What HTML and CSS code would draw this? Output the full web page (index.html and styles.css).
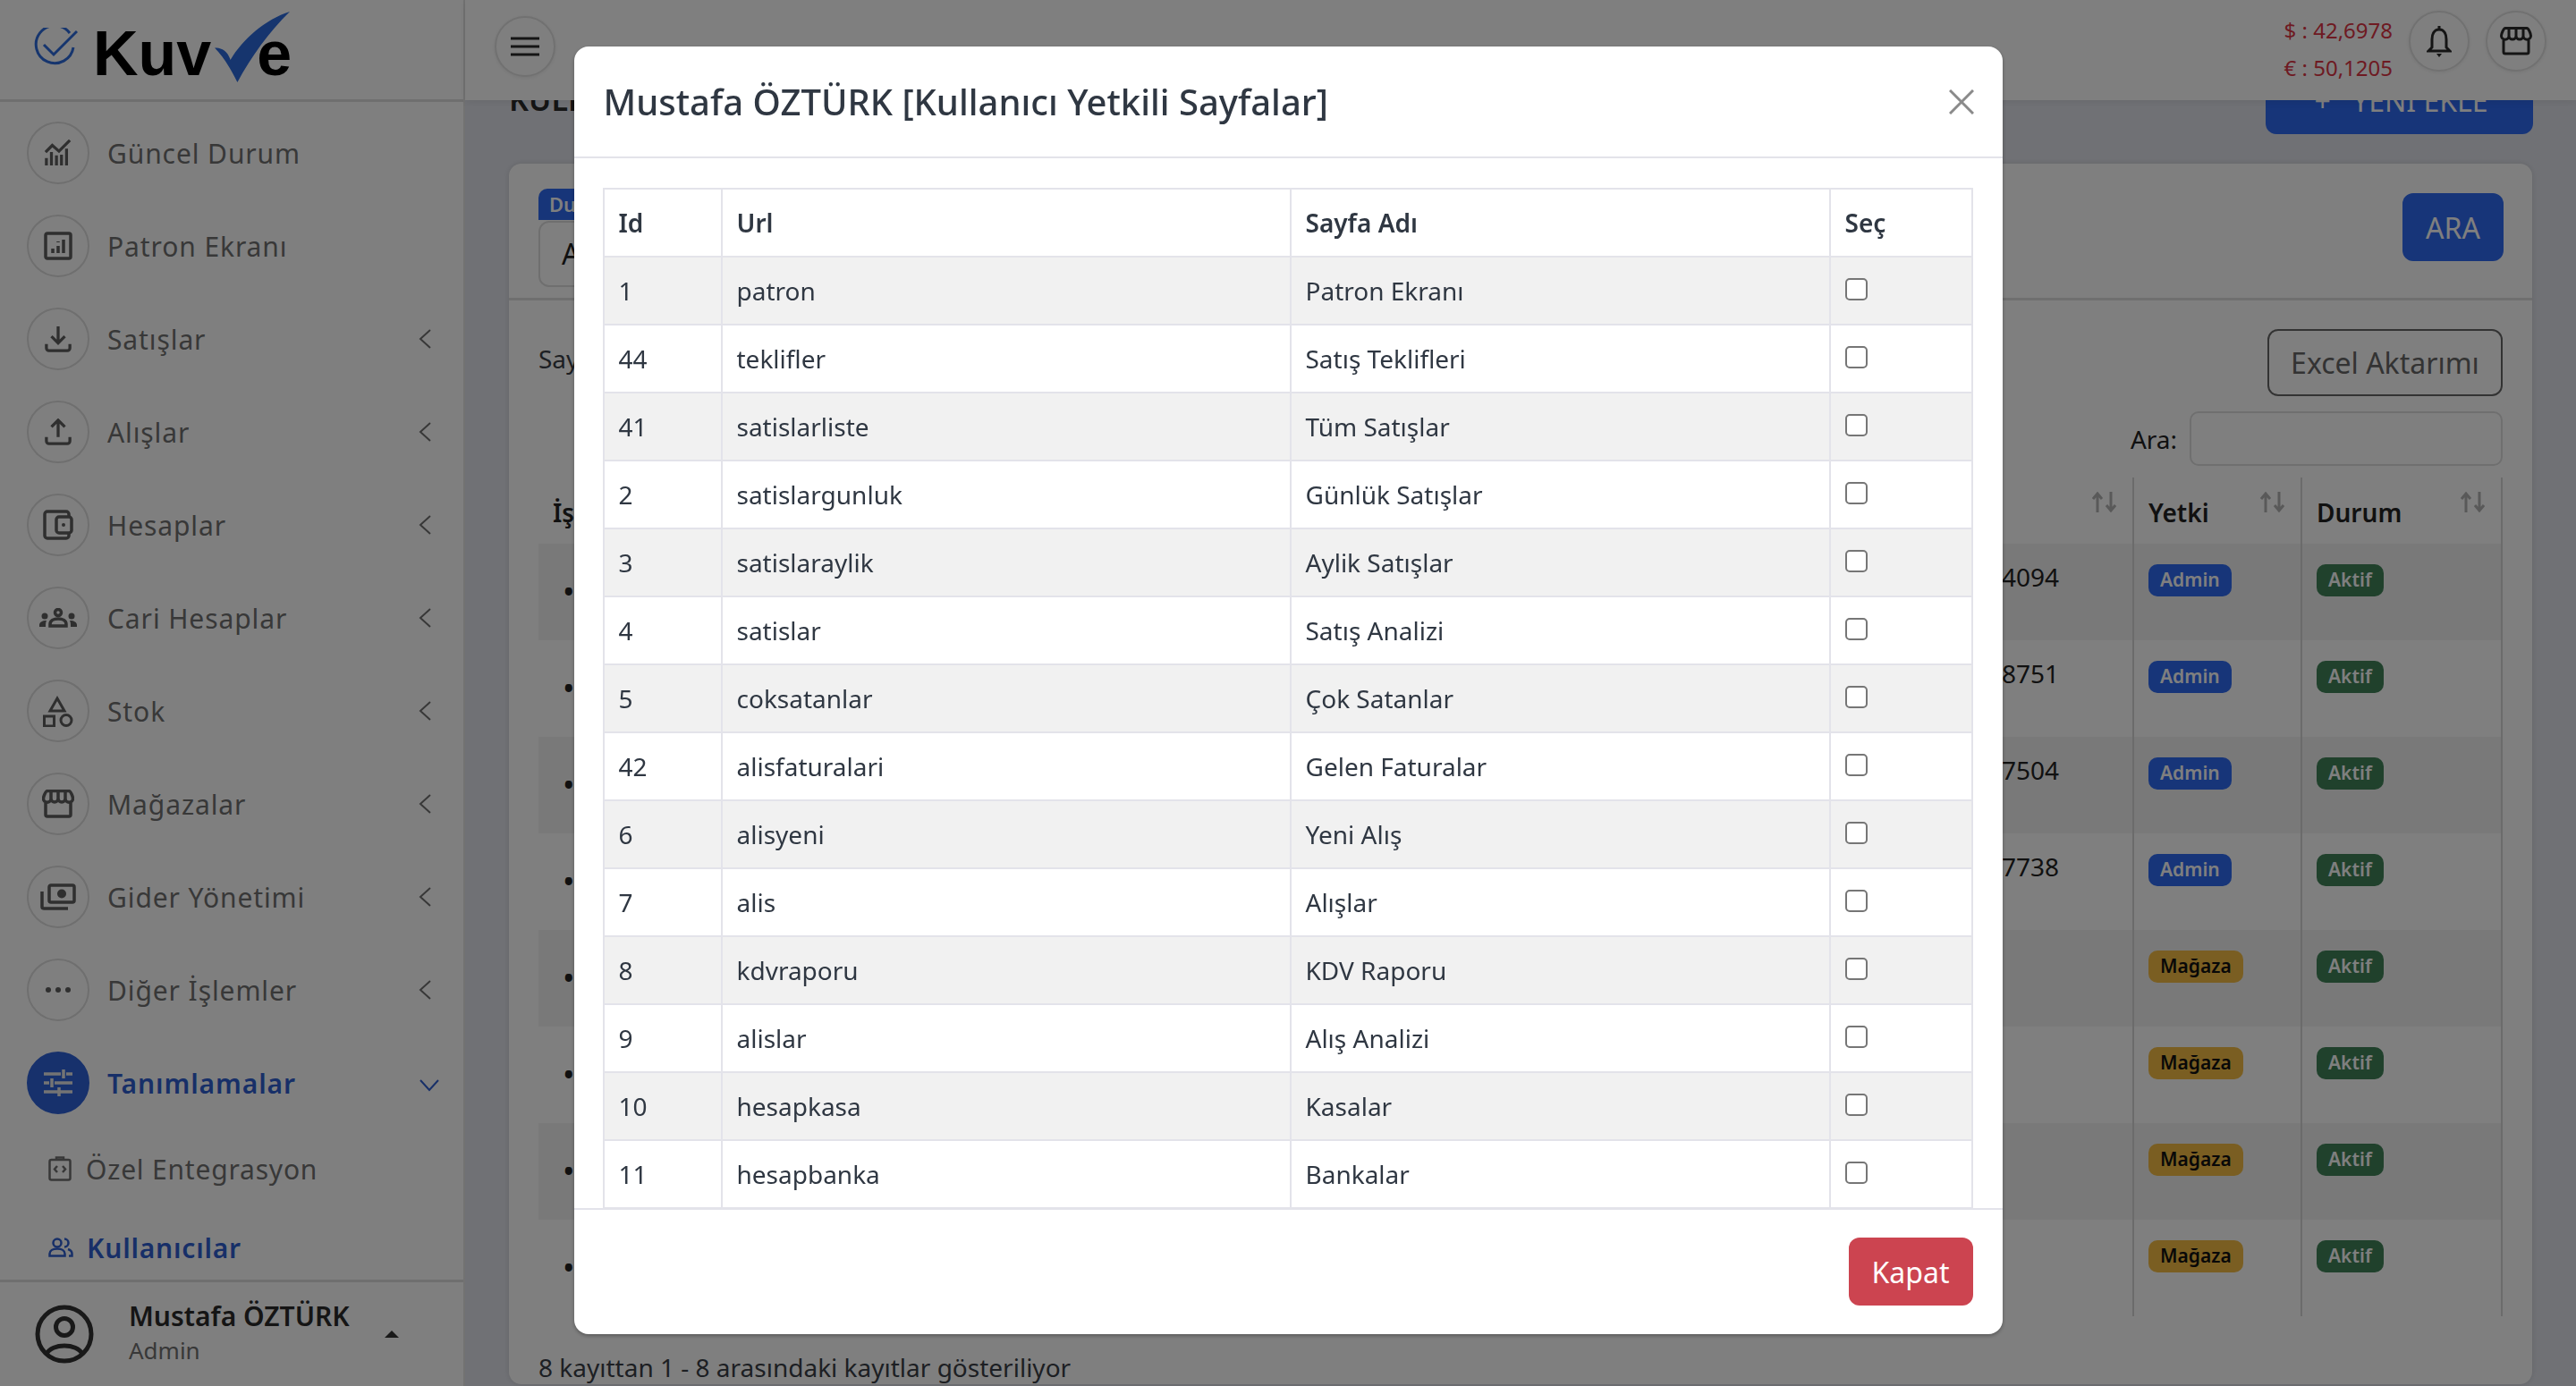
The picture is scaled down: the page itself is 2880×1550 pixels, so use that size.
FILE: index.html
```html
<!DOCTYPE html>
<html lang="tr">
<head>
    <meta charset="UTF-8">
    <meta name="viewport" content="width=device-width, initial-scale=1.0">
    <title>Kullanıcılar</title>
    <link rel="stylesheet" href="styles.css">
</head>
<body>
    <aside class="sidebar">
        <div class="logo">
            <svg class="logo-mark" viewBox="0 0 50 46" width="50" height="46">
                <path d="M41 6A21 21 0 1 0 45 22" />
                <path d="M12 19L23 30L49 4" />
            </svg>
            <span class="logo-text">Kuv</span>
            <svg class="logo-check" viewBox="0 0 86 82" width="84" height="79" preserveAspectRatio="none">
                <path d="M0 42C7 42 14 44 18 56C32 32 58 9 86 0C62 24 42 52 26 82C18 66 10 52 0 42Z" />
            </svg>
            <span class="logo-text logo-end">e</span>
        </div>
        <nav class="menu">
            <a class="menu-item">
                <span class="menu-icon"><svg viewBox="0 0 32 32" width="30" height="30"><path d="M1 15L9 7L17 14L30 1" /><path d="M2 31V22M8 31V15M14 31V19M20 31V18M26 31V11" /></svg></span>
                <span>Güncel Durum</span>
            </a>
            <a class="menu-item">
                <span class="menu-icon"><svg viewBox="0 0 32 32" width="32" height="32"><rect x="2" y="2" width="28" height="28" rx="2" /><path d="M10 24V19M16 24V16M16 12V11M22 24V9" /></svg></span>
                <span>Patron Ekranı</span>
            </a>
            <a class="menu-item">
                <span class="menu-icon"><svg viewBox="0 0 32 32" width="30" height="30"><path d="M16 1V21M8 13L16 21L24 13" /><path d="M2 22V27A3 3 0 0 0 5 30H27A3 3 0 0 0 30 27V22" /></svg></span>
                <span>Satışlar</span>
                <svg class="chevron" viewBox="0 0 14 22" width="14" height="22"><path d="M13 1L2 11L13 21" /></svg>
            </a>
            <a class="menu-item">
                <span class="menu-icon"><svg viewBox="0 0 32 32" width="30" height="30"><path d="M16 22V2M8 10L16 2L24 10" /><path d="M2 22V27A3 3 0 0 0 5 30H27A3 3 0 0 0 30 27V22" /></svg></span>
                <span>Alışlar</span>
                <svg class="chevron" viewBox="0 0 14 22" width="14" height="22"><path d="M13 1L2 11L13 21" /></svg>
            </a>
            <a class="menu-item">
                <span class="menu-icon"><svg viewBox="0 0 34 34" width="34" height="34"><path d="M29 8V5A3 3 0 0 0 26 2H5A3 3 0 0 0 2 5V29A3 3 0 0 0 5 32H26A3 3 0 0 0 29 29V26" /><rect x="15" y="8" width="17" height="18" rx="3" /><circle class="solid" cx="23" cy="17" r="2" /></svg></span>
                <span>Hesaplar</span>
                <svg class="chevron" viewBox="0 0 14 22" width="14" height="22"><path d="M13 1L2 11L13 21" /></svg>
            </a>
            <a class="menu-item">
                <span class="menu-icon"><svg viewBox="0 0 42 22" width="42" height="22"><circle cx="21" cy="5" r="3.5" /><path d="M12 20V18C12 14 16 12 21 12S30 14 30 18V20Z" /><circle class="solid" cx="6" cy="9" r="3.5" /><circle class="solid" cx="36" cy="9" r="3.5" /><path class="solid" d="M0 21V19C0 16 3 14 8 14C7 16 7 18 7 21Z" /><path class="solid" d="M42 21V19C42 16 39 14 34 14C35 16 35 18 35 21Z" /></svg></span>
                <span>Cari Hesaplar</span>
                <svg class="chevron" viewBox="0 0 14 22" width="14" height="22"><path d="M13 1L2 11L13 21" /></svg>
            </a>
            <a class="menu-item">
                <span class="menu-icon"><svg class="icon-thin" viewBox="0 0 34 35" width="34" height="35"><path d="M16 3L24 17H8Z" /><rect x="1.5" y="23" width="11" height="11" /><circle cx="26" cy="27.500" r="6" /></svg></span>
                <span>Stok</span>
                <svg class="chevron" viewBox="0 0 14 22" width="14" height="22"><path d="M13 1L2 11L13 21" /></svg>
            </a>
            <a class="menu-item">
                <span class="menu-icon"><svg viewBox="0 0 36 32" width="36" height="32"><path d="M6 1.5H30C32 1.5 34.5 8 34.5 10A4 4 0 0 1 26 10A4 4 0 0 1 18 10A4 4 0 0 1 10 10A4 4 0 0 1 1.5 10C1.5 8 4 1.5 6 1.5Z" /><path d="M10 2V10M18 2V10M26 2V10" /><path d="M4 15V28A2 2 0 0 0 6 30H30A2 2 0 0 0 32 28V15" /></svg></span>
                <span>Mağazalar</span>
                <svg class="chevron" viewBox="0 0 14 22" width="14" height="22"><path d="M13 1L2 11L13 21" /></svg>
            </a>
            <a class="menu-item">
                <span class="menu-icon"><svg viewBox="0 0 40 30" width="40" height="30"><rect x="10" y="2" width="28" height="19" rx="2" /><circle class="solid" cx="24" cy="11.5" r="5" /><path d="M2 9V26A2 2 0 0 0 4 28H31" /></svg></span>
                <span>Gider Yönetimi</span>
                <svg class="chevron" viewBox="0 0 14 22" width="14" height="22"><path d="M13 1L2 11L13 21" /></svg>
            </a>
            <a class="menu-item">
                <span class="menu-icon"><svg viewBox="0 0 30 8" width="30" height="8"><circle class="solid" cx="4" cy="4" r="3" /><circle class="solid" cx="15" cy="4" r="3" /><circle class="solid" cx="26" cy="4" r="3" /></svg></span>
                <span>Diğer İşlemler</span>
                <svg class="chevron" viewBox="0 0 14 22" width="14" height="22"><path d="M13 1L2 11L13 21" /></svg>
            </a>
            <a class="menu-item menu-active">
                <span class="menu-icon"><svg viewBox="0 0 32 32" width="32" height="32"><path d="M0 6H19M25 6H32M22 1V11M0 16H6M12 16H32M9 11V21M0 26H12M12 26H32M17 21V31" /></svg></span>
                <span>Tanımlamalar</span>
                <svg class="chevron chevron-down" viewBox="0 0 22 14" width="22" height="14"><path d="M1 1L11 12L21 1" /></svg>
            </a>
            <div class="submenu">
                <a class="sub-item">
                    <svg viewBox="0 0 26 28" width="26" height="28"><rect x="1.5" y="4" width="23" height="22.5" rx="2" /><path d="M9 4V1.5H17V4M10 11L7 14.5L10 18M16 11L19 14.5L16 18" /></svg>
                    <span>Özel Entegrasyon</span>
                </a>
                <a class="sub-item sub-active">
                    <svg viewBox="0 0 28 22" width="28" height="22"><circle cx="10" cy="6" r="4.5" /><path d="M1.5 20.5V18C1.5 14.5 5 12.5 10 12.5S18.5 14.5 18.5 18V20.5ZM18 1.5A4.5 4.5 0 0 1 18 10.5M22 13C25 14 26.5 16 26.5 18V20.5H23" /></svg>
                    <span>Kullanıcılar</span>
                </a>
            </div>
        </nav>
        <div class="user-box">
            <svg class="avatar" viewBox="0 0 66 66" width="66" height="66"><circle cx="33" cy="33" r="30" /><circle cx="33" cy="25" r="9.5" /><path d="M13 55C19 43 47 43 53 55" /></svg>
            <div class="user-info">
                <div class="user-name">Mustafa ÖZTÜRK</div>
                <div class="user-role">Admin</div>
            </div>
            <span class="caret"></span>
        </div>
    </aside>

    <div class="main">
        <header class="topbar">
            <button class="round-btn burger">
                <svg viewBox="0 0 32 22" width="32" height="22"><path d="M0 2H32M0 11H32M0 20H32" /></svg>
            </button>
            <div class="rates">
                <div>$ : 42,6978</div>
                <div>€ : 50,1205</div>
            </div>
            <button class="round-btn">
                <svg viewBox="0 0 28 36" width="28" height="36"><path d="M14 5C8 5 6 11 6 16V25L2 29H26L22 25V16C22 11 20 5 14 5ZM14 1V5" /><path class="solid" d="M11 32H17L14 36Z" /></svg>
            </button>
            <button class="round-btn">
                <svg viewBox="0 0 36 32" width="36" height="32"><path d="M6 1.5H30C32 1.5 34.5 8 34.5 10A4 4 0 0 1 26 10A4 4 0 0 1 18 10A4 4 0 0 1 10 10A4 4 0 0 1 1.5 10C1.5 8 4 1.5 6 1.5Z" /><path d="M10 2V10M18 2V10M26 2V10" /><path d="M4 15V28A2 2 0 0 0 6 30H30A2 2 0 0 0 32 28V15" /></svg>
            </button>
        </header>

        <div class="content">
            <div class="page-head">
                <h2>KULLANICILAR</h2>
                <button class="btn-primary btn-new"><span class="plus">+</span> YENİ EKLE</button>
            </div>

            <section class="card">
                <div class="filters">
                    <div class="filter-field">
                        <span class="filter-label">Durum</span>
                        <div class="filter-select">Aktif</div>
                    </div>
                    <button class="btn-primary btn-search">ARA</button>
                </div>
                <div class="card-body">
                    <div class="tools">
                        <span>Sayfada 10 kayıt</span>
                        <button class="btn-excel">Excel Aktarımı</button>
                    </div>
                    <div class="search-row">
                        <label>Ara:</label>
                        <div class="search-box"></div>
                    </div>
                    <table class="users">
                        <colgroup>
                            <col class="col-action">
                            <col class="col-phone">
                            <col class="col-role">
                            <col class="col-state">
                        </colgroup>
                        <thead>
                            <tr>
                                <th>İşlem</th>
                                <th><svg class="sort" viewBox="0 0 27 23" width="27" height="23"><path d="M6 23V3M1 8L6 2L11 8M21 0V20M16 15L21 21L26 15" /></svg></th>
                                <th>Yetki<svg class="sort" viewBox="0 0 27 23" width="27" height="23"><path d="M6 23V3M1 8L6 2L11 8M21 0V20M16 15L21 21L26 15" /></svg></th>
                                <th>Durum<svg class="sort" viewBox="0 0 27 23" width="27" height="23"><path d="M6 23V3M1 8L6 2L11 8M21 0V20M16 15L21 21L26 15" /></svg></th>
                            </tr>
                        </thead>
                        <tbody>
                            <tr><td class="dot">•</td><td>4094</td><td><span class="badge badge-blue">Admin</span></td><td><span class="badge badge-green">Aktif</span></td></tr>
                            <tr><td class="dot">•</td><td>8751</td><td><span class="badge badge-blue">Admin</span></td><td><span class="badge badge-green">Aktif</span></td></tr>
                            <tr><td class="dot">•</td><td>7504</td><td><span class="badge badge-blue">Admin</span></td><td><span class="badge badge-green">Aktif</span></td></tr>
                            <tr><td class="dot">•</td><td>7738</td><td><span class="badge badge-blue">Admin</span></td><td><span class="badge badge-green">Aktif</span></td></tr>
                            <tr><td class="dot">•</td><td></td><td><span class="badge badge-yellow">Mağaza</span></td><td><span class="badge badge-green">Aktif</span></td></tr>
                            <tr><td class="dot">•</td><td></td><td><span class="badge badge-yellow">Mağaza</span></td><td><span class="badge badge-green">Aktif</span></td></tr>
                            <tr><td class="dot">•</td><td></td><td><span class="badge badge-yellow">Mağaza</span></td><td><span class="badge badge-green">Aktif</span></td></tr>
                            <tr><td class="dot">•</td><td></td><td><span class="badge badge-yellow">Mağaza</span></td><td><span class="badge badge-green">Aktif</span></td></tr>
                        </tbody>
                    </table>
                    <div class="table-info">8 kayıttan 1 - 8 arasındaki kayıtlar gösteriliyor</div>
                </div>
            </section>
        </div>
    </div>

    <div class="backdrop">
        <div class="modal">
            <div class="modal-head">
                <h3>Mustafa ÖZTÜRK [Kullanıcı Yetkili Sayfalar]</h3>
                <svg class="modal-close" viewBox="0 0 28 28" width="28" height="28"><path d="M1 1L27 27M27 1L1 27" /></svg>
            </div>
            <div class="modal-body">
                <table class="pages">
                    <colgroup>
                        <col class="col-id">
                        <col class="col-url">
                        <col class="col-name">
                        <col class="col-check">
                    </colgroup>
                    <thead>
                        <tr><th>Id</th><th>Url</th><th>Sayfa Adı</th><th>Seç</th></tr>
                    </thead>
                    <tbody>
                        <tr><td>1</td><td>patron</td><td>Patron Ekranı</td><td><input type="checkbox"></td></tr>
                        <tr><td>44</td><td>teklifler</td><td>Satış Teklifleri</td><td><input type="checkbox"></td></tr>
                        <tr><td>41</td><td>satislarliste</td><td>Tüm Satışlar</td><td><input type="checkbox"></td></tr>
                        <tr><td>2</td><td>satislargunluk</td><td>Günlük Satışlar</td><td><input type="checkbox"></td></tr>
                        <tr><td>3</td><td>satislaraylik</td><td>Aylik Satışlar</td><td><input type="checkbox"></td></tr>
                        <tr><td>4</td><td>satislar</td><td>Satış Analizi</td><td><input type="checkbox"></td></tr>
                        <tr><td>5</td><td>coksatanlar</td><td>Çok Satanlar</td><td><input type="checkbox"></td></tr>
                        <tr><td>42</td><td>alisfaturalari</td><td>Gelen Faturalar</td><td><input type="checkbox"></td></tr>
                        <tr><td>6</td><td>alisyeni</td><td>Yeni Alış</td><td><input type="checkbox"></td></tr>
                        <tr><td>7</td><td>alis</td><td>Alışlar</td><td><input type="checkbox"></td></tr>
                        <tr><td>8</td><td>kdvraporu</td><td>KDV Raporu</td><td><input type="checkbox"></td></tr>
                        <tr><td>9</td><td>alislar</td><td>Alış Analizi</td><td><input type="checkbox"></td></tr>
                        <tr><td>10</td><td>hesapkasa</td><td>Kasalar</td><td><input type="checkbox"></td></tr>
                        <tr><td>11</td><td>hesapbanka</td><td>Bankalar</td><td><input type="checkbox"></td></tr>
                    </tbody>
                </table>
            </div>
            <div class="modal-foot">
                <button class="btn-close">Kapat</button>
            </div>
        </div>
    </div>
</body>
</html>
```

FILE: styles.css
```css
* {
    box-sizing: border-box;
}

html, body {
    height: 100%;
}

body {
    margin: 0;
    display: flex;
    overflow: hidden;
    font-family: "Noto Sans", "Open Sans", sans-serif;
    font-size: 28px;
    color: #3a3f47;
    background-color: #e1e3eb;
}

button {
    font-family: inherit;
    cursor: pointer;
}

svg path, svg rect, svg circle {
    fill: none;
    stroke: currentColor;
    stroke-width: 3;
}

svg .solid {
    fill: currentColor;
    stroke: none;
}

/* sidebar */
.sidebar {
    width: 520px;
    flex-shrink: 0;
    height: 100%;
    display: flex;
    flex-direction: column;
    background-color: #fff;
    border-right: 2px solid #e4e4e4;
}

.logo {
    position: relative;
    height: 114px;
    flex-shrink: 0;
    display: flex;
    align-items: flex-start;
    padding: 31px 0 0 37px;
    border-bottom: 3px solid #dedede;
}

.logo-mark {
    color: #2c6bdc;
    margin-right: 17px;
}

.logo-text {
    font-family: "Liberation Sans", Arial, sans-serif;
    font-weight: 700;
    font-size: 70px;
    line-height: 66px;
    color: #000;
    margin-top: -4px;
}

.logo-end {
    margin-left: 51px;
}

.logo-check {
    position: absolute;
    left: 240px;
    top: 13px;
}

.logo-check path {
    fill: #2c6bdc;
    stroke: none;
}

.menu {
    flex: 1;
    overflow: hidden;
    display: flex;
    flex-direction: column;
    gap: 34px;
    padding: 22px 36px 0 30px;
}

.menu-item {
    display: flex;
    align-items: center;
    flex-shrink: 0;
    height: 70px;
    gap: 20px;
    font-size: 30px;
    letter-spacing: 0.9px;
    color: #707070;
}

.menu-icon {
    width: 70px;
    height: 70px;
    flex-shrink: 0;
    display: flex;
    align-items: center;
    justify-content: center;
    border: 2px solid #dedede;
    border-radius: 50%;
    color: #5e5e5e;
}

.menu-icon svg path, .menu-icon svg rect, .menu-icon svg circle {
    stroke-width: 3.5;
}

.menu-icon svg .solid {
    stroke: none;
}

.menu-icon .icon-thin path, .menu-icon .icon-thin rect, .menu-icon .icon-thin circle {
    stroke-width: 3;
}

.chevron {
    margin-left: auto;
    color: #707070;
}

.chevron path {
    stroke-width: 2;
}

.menu-active {
    font-weight: 600;
    color: #2f5fd0;
}

.menu-active .menu-icon {
    background-color: #2f62d8;
    border-color: #2f62d8;
    color: #e8e8e8;
}

.chevron-down {
    margin-right: -9px;
    margin-top: 6px;
    color: #2f5fd0;
}

.submenu {
    margin: -17px 0 0 24px;
    flex-shrink: 0;
}

.sub-item {
    display: flex;
    align-items: center;
    height: 88px;
    gap: 16px;
    font-size: 30px;
    letter-spacing: 0.8px;
    color: #707070;
}

.sub-item svg path, .sub-item svg rect, .sub-item svg circle {
    stroke-width: 2.5;
}

.sub-active {
    font-weight: 600;
    color: #2f5fd0;
}

.sub-active svg {
    margin-right: -1px;
}

.user-box {
    height: 119px;
    flex-shrink: 0;
    display: flex;
    align-items: center;
    padding: 0 0 4px 39px;
    border-top: 3px solid #dedede;
}

.avatar {
    color: #333;
    margin-top: 4px;
}

.avatar circle, .avatar path {
    stroke-width: 5;
}

.user-info {
    margin-left: 39px;
    width: 286px;
}

.user-name {
    font-size: 30px;
    font-weight: 600;
    line-height: 40px;
    color: #2a2a2a;
}

.user-role {
    font-size: 26px;
    line-height: 36px;
    color: #707070;
}

.caret {
    width: 0;
    height: 0;
    border-left: 8px solid transparent;
    border-right: 8px solid transparent;
    border-bottom: 8px solid #333;
    margin-top: 4px;
}

/* top bar */
.main {
    flex: 1;
    min-width: 0;
    height: 100%;
    display: flex;
    flex-direction: column;
}

.topbar {
    position: relative;
    z-index: 2;
    height: 112px;
    flex-shrink: 0;
    display: flex;
    align-items: center;
    gap: 18px;
    padding: 0 33px 0 33px;
    background-color: #fff;
    box-shadow: 0 2px 8px rgba(0, 0, 0, 0.08);
}

.round-btn {
    width: 68px;
    height: 68px;
    display: flex;
    align-items: center;
    justify-content: center;
    padding: 0;
    margin-top: -20px;
    background-color: #fff;
    border: 2px solid #e2e2e2;
    border-radius: 50%;
    color: #2a2a2a;
    box-shadow: 0 1px 4px rgba(0, 0, 0, 0.08);
}

.burger {
    margin-top: -8px;
    margin-right: auto;
}

.rates {
    font-size: 24px;
    line-height: 42px;
    color: #dc3545;
    margin-top: -2px;
}

/* page */
.content {
    flex: 1;
    min-height: 0;
    overflow: hidden;
    padding: 0 49px 0 49px;
}

.page-head {
    display: flex;
    align-items: center;
    justify-content: space-between;
    margin-top: -38px;
    margin-bottom: 33px;
}

.page-head h2 {
    margin: -2px 0 0 0;
    font-size: 34px;
    font-weight: 600;
    color: #2a2a2a;
}

.btn-primary {
    border: none;
    border-radius: 12px;
    background-color: #2e6af2;
    color: #fff;
    font-size: 32px;
}

.btn-new {
    width: 299px;
    height: 76px;
    margin-right: -1px;
    padding-left: 10px;
}

.plus {
    margin-right: 16px;
}

.card {
    background-color: #fff;
    border-radius: 14px;
    box-shadow: 0 0 6px rgba(0, 0, 0, 0.12);
}

.filters {
    display: flex;
    justify-content: space-between;
    align-items: flex-start;
    height: 153px;
    padding: 24px 32px 0 33px;
    border-bottom: 3px solid #dedede;
}

.filter-label {
    display: inline-block;
    height: 35px;
    padding: 0 18px 0 12px;
    background-color: #2e6af2;
    border-radius: 10px 10px 10px 0;
    color: #fff;
    font-size: 22px;
    font-weight: 600;
    line-height: 35px;
}

.filter-select {
    width: 500px;
    height: 74px;
    margin-top: 1px;
    padding-left: 24px;
    border: 2px solid #dedede;
    border-radius: 12px;
    font-size: 32px;
    line-height: 70px;
    color: #222;
}

.btn-search {
    width: 113px;
    height: 76px;
    margin-top: 9px;
}

.card-body {
    padding: 32px 33px 0 33px;
}

.tools {
    display: flex;
    justify-content: space-between;
    align-items: flex-start;
    height: 75px;
    color: #3a3f47;
}

.tools span {
    line-height: 66px;
}

.btn-excel {
    width: 263px;
    height: 75px;
    background-color: #fff;
    border: 2px solid #666;
    border-radius: 12px;
    color: #666;
    font-size: 32px;
}

.search-row {
    display: flex;
    align-items: center;
    justify-content: flex-end;
    gap: 14px;
    margin-top: 17px;
    color: #222;
}

.search-box {
    width: 350px;
    height: 61px;
    border: 2px solid #dedede;
    border-radius: 10px;
}

.users {
    width: 2195px;
    margin-top: 13px;
    table-layout: fixed;
    border-collapse: collapse;
}

.col-action { width: 1636px; }
.col-phone { width: 147px; }
.col-role { width: 188px; }
.col-state { width: 224px; }

.users th {
    position: relative;
    height: 74px;
    padding: 3px 16px 0 16px;
    text-align: left;
    font-size: 28px;
    font-weight: 600;
    color: #222;
}

.users td {
    height: 108px;
    padding: 0 16px 0 0;
    vertical-align: top;
    color: #222;
}

.users tbody tr:nth-child(odd) td {
    background-color: #f2f2f2;
}

.users th:nth-child(n+3), .users td:nth-child(n+3) {
    border-left: 2px solid #d6d6d6;
}

.users th:last-child, .users td:last-child {
    border-right: 2px solid #d6d6d6;
}

.users td:nth-child(2) {
    padding-top: 18px;
    padding-left: 0;
}

.users td:nth-child(n+3) {
    padding: 23px 0 0 16px;
}

.users td.dot {
    padding: 28px 0 0 27px;
    font-size: 36px;
    line-height: 52px;
    color: #222;
}

.sort {
    position: absolute;
    right: 18px;
    top: 16px;
    color: #b2b2b2;
}

.sort path {
    stroke-width: 3;
}

.badge {
    display: inline-block;
    height: 36px;
    padding: 0 13px;
    border-radius: 10px;
    font-size: 21px;
    font-weight: 600;
    line-height: 35px;
    vertical-align: top;
}

.badge-blue {
    background-color: #2e6af2;
    color: #fff;
}

.badge-green {
    background-color: #408258;
    color: #fff;
}

.badge-yellow {
    background-color: #f4bd44;
    color: #111;
}

.table-info {
    margin-top: 38px;
    font-size: 28px;
    color: #3a3f47;
}

/* modal */
.backdrop {
    position: fixed;
    z-index: 10;
    top: 0;
    left: 0;
    width: 100%;
    height: 100%;
    display: flex;
    justify-content: center;
    align-items: flex-start;
    padding-top: 52px;
    background-color: rgba(0, 0, 0, 0.5);
}

.modal {
    width: 1597px;
    height: 1440px;
    display: flex;
    flex-direction: column;
    background-color: #fff;
    border-radius: 16px;
    box-shadow: 0 2px 4px rgba(0, 0, 0, 0.3);
}

.modal-head {
    height: 125px;
    flex-shrink: 0;
    display: flex;
    align-items: center;
    justify-content: space-between;
    padding: 0 32px 0 33px;
    border-bottom: 2px solid #e3e3ea;
}

.modal-head h3 {
    margin: 0;
    font-size: 40px;
    font-weight: 500;
    color: #2f3742;
}

.modal-close {
    color: #8a8a8a;
}

.modal-body {
    flex: 1;
    min-height: 0;
    overflow: hidden;
    padding: 33px 33px 0 32px;
}

.pages {
    width: 1530px;
    table-layout: fixed;
    border-collapse: collapse;
    color: #2f3742;
}

.col-id { width: 132px; }
.col-url { width: 636px; }
.col-name { width: 603px; }
.col-check { width: 159px; }

.pages th, .pages td {
    height: 76px;
    padding: 0 16px;
    border: 2px solid #e3e3ea;
    text-align: left;
    font-size: 28px;
}

.pages th {
    font-weight: 600;
}

.pages tbody tr:nth-child(odd) td {
    background-color: #f1f1f1;
}

.pages input[type="checkbox"] {
    appearance: none;
    display: block;
    width: 25px;
    height: 25px;
    margin: -4px 0 0 0;
    background-color: #fff;
    border: 2px solid #767676;
    border-radius: 5px;
}

.modal-foot {
    height: 141px;
    flex-shrink: 0;
    display: flex;
    justify-content: flex-end;
    align-items: flex-start;
    padding: 31px 33px 0 0;
    border-top: 2px solid #e3e3ea;
}

.btn-close {
    width: 139px;
    height: 76px;
    background-color: #cc4450;
    border: none;
    border-radius: 12px;
    color: #fff;
    font-size: 32px;
}
```
